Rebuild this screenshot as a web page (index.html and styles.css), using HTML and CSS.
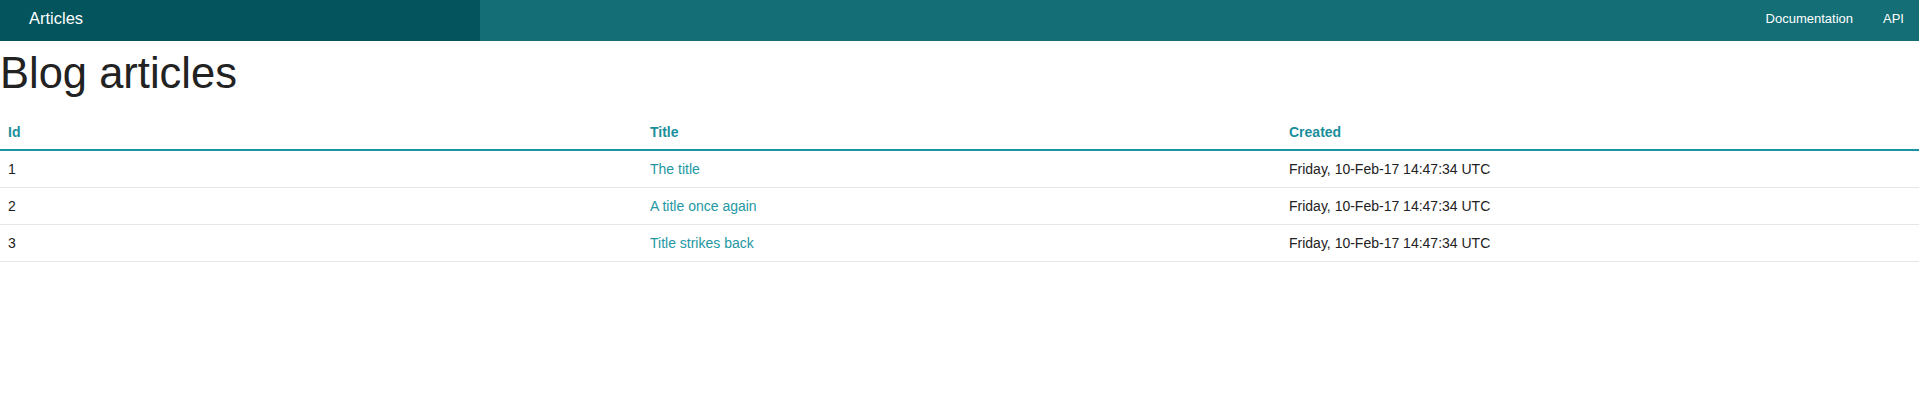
FILE: index.html
```html
<!DOCTYPE html>
<html lang="en">
<head>
<meta charset="utf-8">
<title>Articles</title>
<link rel="stylesheet" href="styles.css">
</head>
<body>
<nav class="navbar">
  <div class="brand-box"><a class="brand" href="#">Articles</a></div>
  <div class="nav-main">
    <a class="nav-link" href="#">Documentation</a>
    <a class="nav-link" href="#">API</a>
  </div>
</nav>
<main class="content">
  <h1 class="page-title">Blog articles</h1>
  <table class="articles">
    <colgroup>
      <col class="col-id">
      <col class="col-title">
      <col class="col-created">
    </colgroup>
    <thead>
      <tr><th>Id</th><th>Title</th><th>Created</th></tr>
    </thead>
    <tbody>
      <tr><td>1</td><td><a href="#">The title</a></td><td>Friday, 10-Feb-17 14:47:34 UTC</td></tr>
      <tr><td>2</td><td><a href="#">A title once again</a></td><td>Friday, 10-Feb-17 14:47:34 UTC</td></tr>
      <tr><td>3</td><td><a href="#">Title strikes back</a></td><td>Friday, 10-Feb-17 14:47:34 UTC</td></tr>
    </tbody>
  </table>
</main>
</body>
</html>
```
FILE: styles.css
```css
html, body {
  margin: 0;
  padding: 0;
  background: #fff;
}
body {
  font-family: "Liberation Sans", Arial, sans-serif;
  font-size: 14px;
  color: #222;
}
a {
  text-decoration: none;
}
.navbar {
  display: flex;
  height: 41px;
  background: #136e75;
}
.brand-box {
  width: 25%;
  background: #03545c;
  padding-left: 29px;
  box-sizing: border-box;
}
.brand {
  display: block;
  color: #fff;
  font-size: 16.5px;
  line-height: 36px;
}
.nav-main {
  flex: 1;
  display: flex;
  justify-content: flex-end;
}
.nav-link {
  color: #fff;
  font-size: 13px;
  line-height: 37px;
  padding: 0 15px;
}
.page-title {
  margin: 7px 0 15px;
  font-size: 43.5px;
  font-weight: normal;
  line-height: 50px;
  color: #222;
}
.articles {
  width: 100%;
  border-collapse: collapse;
  table-layout: fixed;
}
.col-id { width: 642px; }
.col-title { width: 639px; }
.articles th,
.articles td {
  text-align: left;
  padding: 8px;
  line-height: 20px;
  vertical-align: top;
}
.articles th {
  padding: 9px 8px 7px;
  color: #1a8f9b;
  font-weight: bold;
  border-bottom: 2px solid #1a949e;
}
.articles td {
  border-bottom: 1px solid #e6e6e6;
}
.articles td a {
  color: #2497a3;
}
```
